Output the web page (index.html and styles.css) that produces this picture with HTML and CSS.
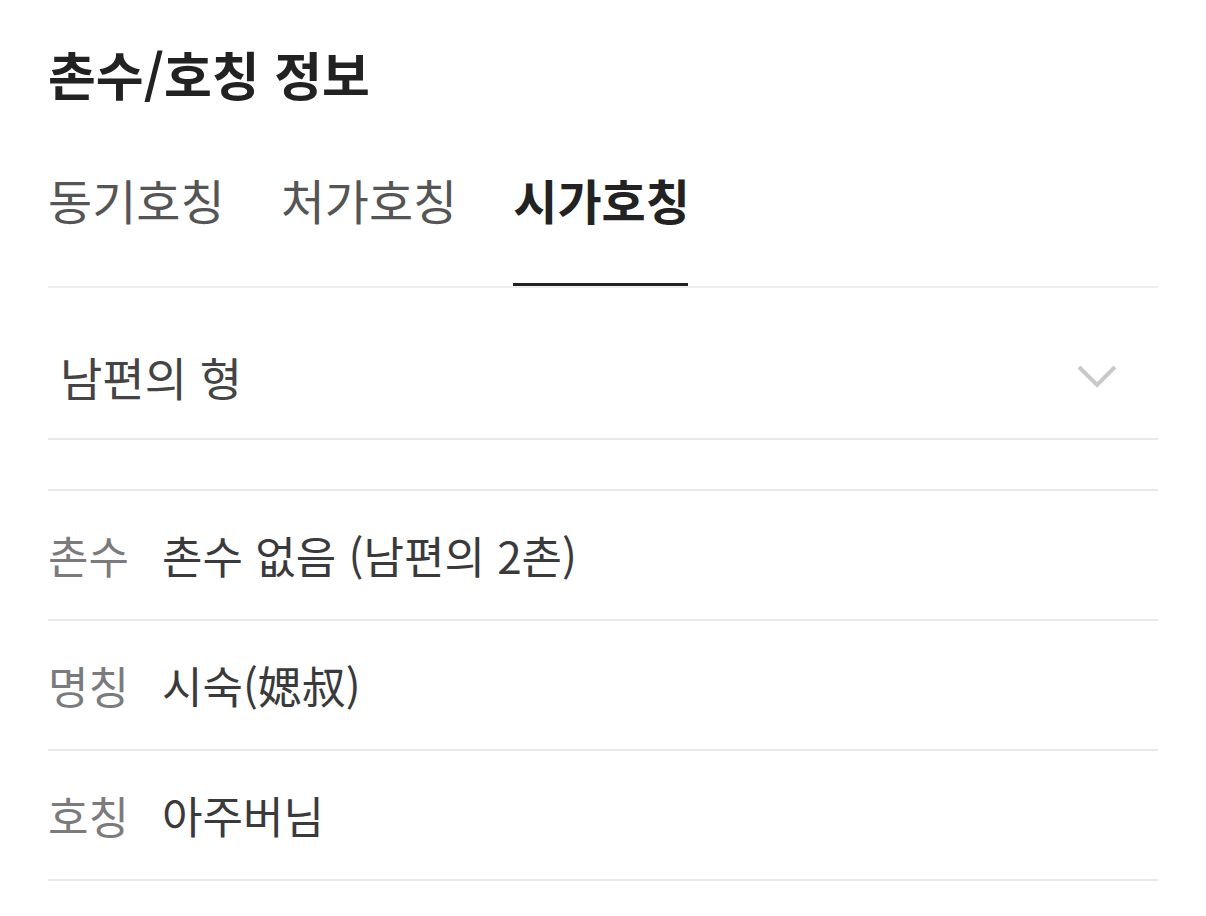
FILE: index.html
```html
<!DOCTYPE html>
<html lang="ko">
<head>
  <meta charset="UTF-8" />
  <meta name="viewport" content="width=device-width, initial-scale=1.0" />
  <title>촌수/호칭 정보</title>
  <link rel="stylesheet" href="styles.css">
</head>
<body>
  <div class="page">
    <h1 class="title">촌수/호칭 정보</h1>

    <div class="tabs">
      <div class="tab">동기호칭</div>
      <div class="tab">처가호칭</div>
      <div class="tab active">시가호칭</div>
    </div>

    <div class="select">
      <span class="select-text">남편의 형</span>
      <svg class="chevron" width="42" height="26" viewBox="0 0 42 26">
        <polyline points="3,3 21,21 39,3" fill="none" stroke="#c9c9c9" stroke-width="4" />
      </svg>
    </div>

    <div class="info">
      <div class="row">
        <span class="label">촌수</span>
        <span class="value">촌수 없음 (남편의 2촌)</span>
      </div>
      <div class="row">
        <span class="label">명칭</span>
        <span class="value">시숙(媤叔)</span>
      </div>
      <div class="row">
        <span class="label">호칭</span>
        <span class="value">아주버님</span>
      </div>
    </div>
  </div>
</body>
</html>
```

FILE: styles.css
```css
body {
  margin: 0;
  padding: 0;
  background: #fff;
  font-family: "Noto Sans CJK KR", "Noto Sans", sans-serif;
  color: #333;
}

.page {
  padding: 0 48px;
}

.title {
  margin: 0;
  padding-top: 44px;
  font-size: 52px;
  line-height: 60px;
  font-weight: 700;
  color: #222;
}

.tabs {
  display: flex;
  gap: 56px;
  border-bottom: 2px solid #eeeef0;
}

.tab {
  position: relative;
  padding-top: 68px;
  padding-bottom: 60px;
  font-size: 48px;
  line-height: 54px;
  color: #555;
}

.tab.active {
  font-weight: 700;
  color: #222;
}

.tab.active::after {
  content: "";
  position: absolute;
  left: 0;
  right: 2px;
  bottom: 0;
  height: 3px;
  background: #222;
}

.select {
  display: flex;
  align-items: center;
  justify-content: space-between;
  padding: 61px 40px 35px 12px;
  border-bottom: 2px solid #e8e8ea;
}

.select-text {
  font-size: 46px;
  line-height: 54px;
  color: #444;
}

.chevron {
  margin-top: 2px;
}

.info {
  margin-top: 49px;
  border-top: 2px solid #e8e8ea;
}

.row {
  display: flex;
  align-items: center;
  height: 128px;
  border-bottom: 2px solid #e8e8ea;
  font-size: 44px;
}

.label {
  width: 114px;
  color: #7b7b7e;
}

.value {
  color: #3a3a3c;
}
```
